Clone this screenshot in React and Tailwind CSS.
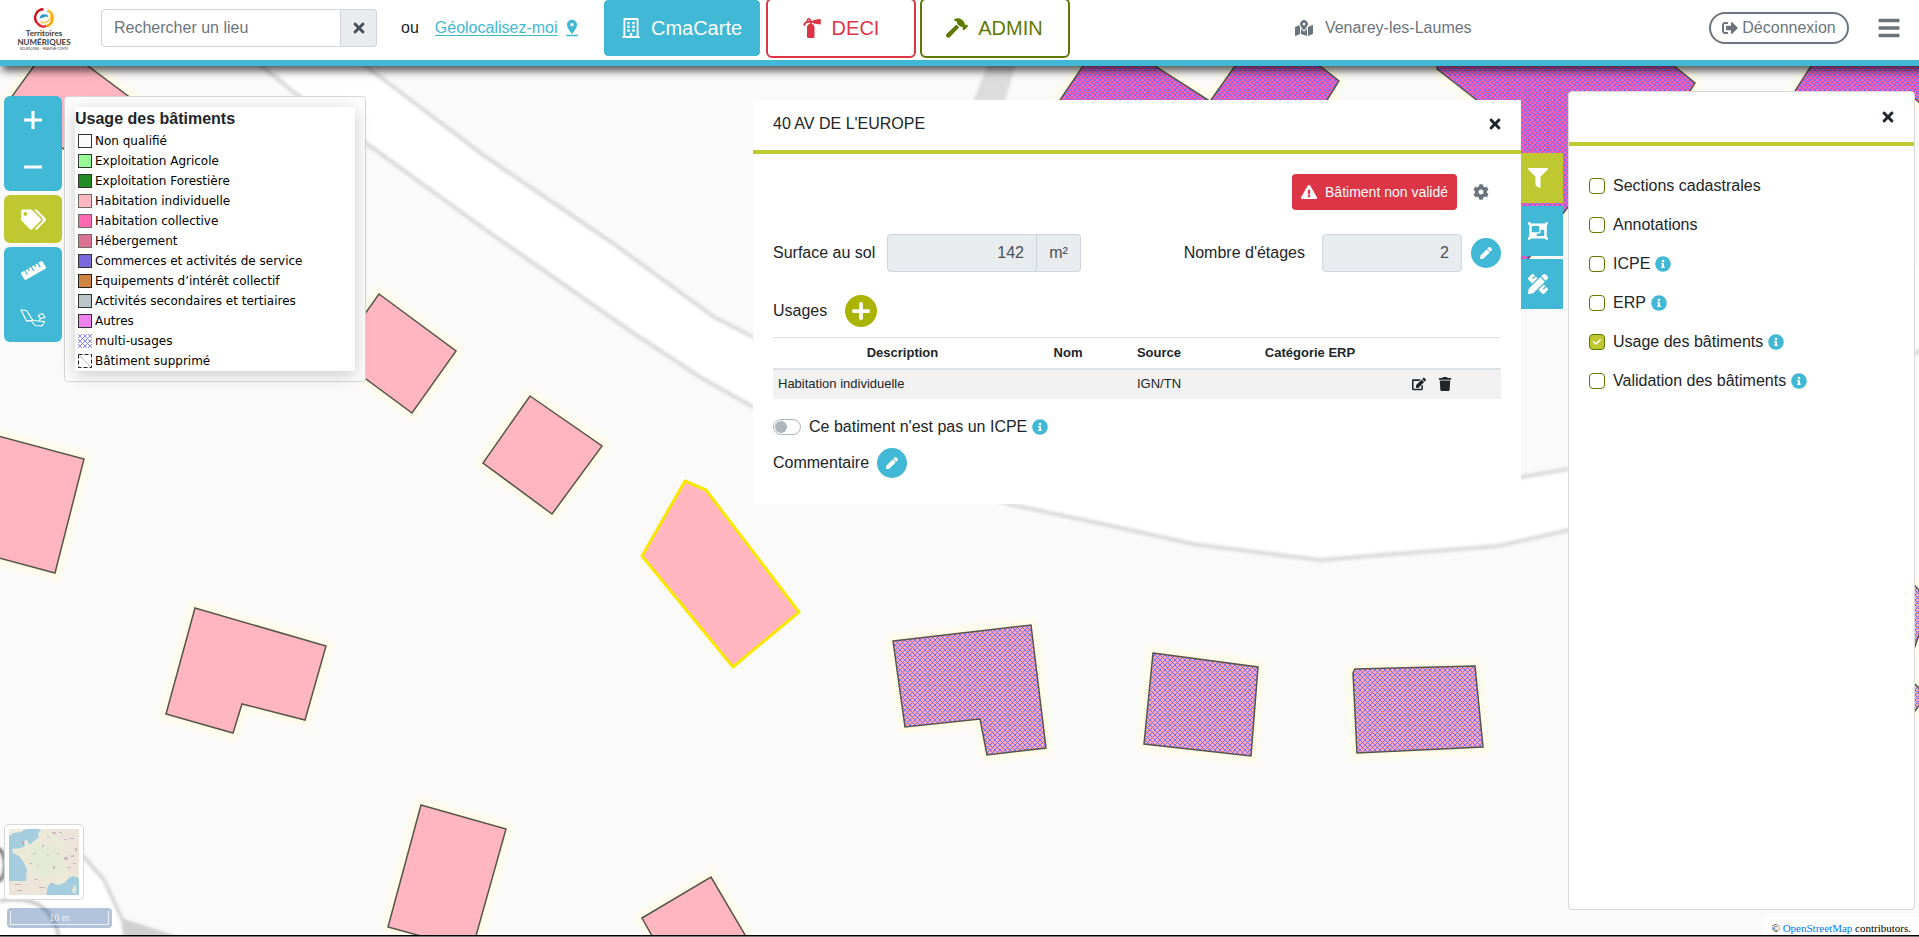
import React, { useState } from "react";
import {
  FaTimes, FaRegBuilding, FaFireExtinguisher, FaHammer, FaMapMarkedAlt, FaSignOutAlt,
  FaBars, FaInfoCircle, FaExclamationTriangle, FaCog, FaPen, FaEdit, FaTrash, FaFilter,
  FaObjectGroup, FaPencilRuler, FaTags, FaRuler, FaPlus, FaCheck,
} from "react-icons/fa";
import { MdPinDrop } from "react-icons/md";

const INDIVIDUAL = [
  "34,66 55,38 88,66 140,105 98,174 5,106",
  "379,294 456,351 412,413 335,356",
  "530,396 602,446 552,514 483,463",
  "-2,436 84,459 55,573 -5,557",
  "195,608 326,646 305,720 242,704 233,733 166,714",
  "421,805 506,829 472,950 388,927",
  "642,918 711,877 748,940 660,950",
];
const MIXED_COLLECTIVE = [
  "1083,66 1060,100 1150,160 1208,100 1155,66 1120,40",
  "1235,66 1211,100 1300,140 1327,100 1339,81 1320,66 1280,40",
  "1437,69 1515,130 1460,200 1515,276 1568,207 1640,140 1690,91 1695,83 1674,66 1660,50 1440,50",
  "1811,66 1795,91 1850,140 1914,98 1930,112 1930,50 1820,50",
];
const MIXED_INDIVIDUAL = [
  "893,641 1031,625 1046,748 987,755 980,719 905,727",
  "1153,653 1258,667 1251,756 1144,744",
  "1355,669 1475,666 1483,747 1357,753 1353,673",
  "1900,570 1919,590 1924,620 1900,690",
  "1900,670 1919,688 1922,702 1900,730",
];

function CityMap() {
  return (
    <svg
      className="absolute inset-0 h-full w-full"
      viewBox="0 66 1919 871"
      preserveAspectRatio="xMinYMin slice"
      aria-hidden="true"
    >
      <defs>
        <pattern id="hatch-pink" width="5" height="5" patternUnits="userSpaceOnUse">
          <rect width="5" height="5" fill="#ffa6b8" />
          <path d="M-1 -1L6 6M-1 6L6 -1" stroke="#6a6aff" strokeWidth="0.900" />
        </pattern>
        <pattern id="hatch-hot" width="5" height="5" patternUnits="userSpaceOnUse">
          <rect width="5" height="5" fill="#ff5fb0" />
          <path d="M-1 -1L6 6M-1 6L6 -1" stroke="#6a6aff" strokeWidth="0.900" />
        </pattern>
        <filter id="soft" x="-5%" y="-5%" width="110%" height="110%">
          <feGaussianBlur stdDeviation="1.5" />
        </filter>
        <filter id="halo" x="-5%" y="-5%" width="110%" height="110%">
          <feGaussianBlur stdDeviation="3" />
        </filter>
      </defs>
      <rect x="0" y="0" width="1919" height="937" fill="#fafafa" />
      <g filter="url(#soft)">
        <path
          d="M262 60L300 95L366 142L486 230L629 330L700 377L753 407L900 465L1009 504L1117 527L1193 544L1264 553L1320 560L1381 555L1498 546L1569 530L1930 340L1930 260L1569 469L1522 477L1320 490L1000 430L753 337L714 317L611 242L486 157L371 70L360 60Z"
          fill="#fff"
        />
        <g fill="none" stroke="#d9d9d9" strokeWidth="4">
          <path d="M254 60L300 97L366 143L486 230L629 330L700 377L753 407L900 467L1009 504L1117 527L1193 544L1264 553L1320 560L1381 555L1498 546L1569 530L1700 460L1930 346" />
          <path d="M358 60L371 70L486 157L611 242L714 317L753 337L1000 430L1320 490L1522 477L1569 469" />
        </g>
        <path d="M990 60L1017 60L1004 104L972 104Z" fill="#dcdcdc" />
        <path d="M0 845L60 840L84 857L104 880L123 921L130 940L0 940Z" fill="#fff" />
        <path d="M60 838L84 857L104 880L123 921" fill="none" stroke="#d6d6d6" strokeWidth="4" />
        <path d="M121 918L180 937L123 937Z" fill="#d0d0d0" />
        <path d="M0 901Q50 892 59 937" fill="none" stroke="#c8c8c8" strokeWidth="4" />
        <ellipse cx="-2" cy="865" rx="7" ry="16" fill="none" stroke="#6e6e6e" strokeWidth="4" />
      </g>
      <g fill="none" stroke="#fffce6" strokeWidth="12" filter="url(#halo)">
        {[...INDIVIDUAL, ...MIXED_COLLECTIVE, ...MIXED_INDIVIDUAL].map((p) => (
          <polygon key={p} points={p} />
        ))}
      </g>
      <g stroke="#55554d" strokeWidth="1.5">
        {INDIVIDUAL.map((p) => <polygon key={p} points={p} fill="#ffb6c1" />)}
        {MIXED_COLLECTIVE.map((p) => <polygon key={p} points={p} fill="url(#hatch-hot)" />)}
        {MIXED_INDIVIDUAL.map((p) => <polygon key={p} points={p} fill="url(#hatch-pink)" />)}
      </g>
      <polygon
        points="685,481 706,490 799,612 733,667 642,556"
        fill="#ffb6c1" stroke="#f8e800" strokeWidth="3" strokeLinejoin="round"
      />
    </svg>
  );
}

function Logo() {
  return (
    <a href="#accueil" className="flex w-[50px] flex-col items-center pt-0.5 font-['Lato',sans-serif] font-bold text-[#3a3a3a]">
      <svg className="h-5 w-5" viewBox="0 0 20 20" fill="none" aria-hidden="true">
        <path d="M9.500 1.300A8.300 8.300 0 0 0 3.200 15" stroke="#c8141c" strokeWidth="2.400" />
        <path d="M3.200 15A8.300 8.300 0 0 0 12.500 18" stroke="#e5262c" strokeWidth="2.200" />
        <path d="M12.500 18A8.300 8.300 0 0 0 13.500 2.400" stroke="#f6a800" strokeWidth="2.600" />
        <path d="M13.500 2.400A6 6 0 0 1 13.600 13.200A6 6 0 0 1 6.500 13.600" stroke="#f9c440" strokeWidth="1.500" />
        <path d="M5.500 11C5.500 7 9 5.200 12.500 6.600C14 7.300 14.400 8.500 14 9.600C12.500 7.800 11 8.600 9.500 9.600C8.300 10.300 7 9.800 5.500 11Z" fill="#2a9ac4" />
      </svg>
      <span className="mt-px text-[8px] leading-[9px]">Territoires</span>
      <span className="text-[8px] leading-[9px]">NUMÉRIQUES</span>
      <span className="text-[3px] leading-[4px] font-normal">BOURGOGNE – FRANCHE-COMTÉ</span>
    </a>
  );
}

function Header() {
  return (
    <header className="relative z-20 flex h-[66px] items-center border-b-[6px] border-[#41b8d5] bg-white pr-[18px] pb-1 pl-[19px] shadow-[5px_2px_8px_3px_rgba(0,0,0,0.65)]">
      <Logo />
      <form className="ml-8 flex h-[38px] w-[276px]" onSubmit={(e) => e.preventDefault()}>
        <input
          type="text"
          aria-label="Rechercher un lieu"
          placeholder="Rechercher un lieu"
          className="min-w-0 flex-1 rounded-l border border-[#ced4da] px-3 text-[#495057] placeholder:text-[#6c757d]"
        />
        <button type="button" aria-label="Effacer" className="flex w-9 items-center justify-center rounded-r border border-l-0 border-[#ced4da] bg-[#e9ecef] text-[#495057]">
          <FaTimes size={16} />
        </button>
      </form>
      <span className="ml-6">ou</span>
      <a href="#geolocalisation" className="ml-4 flex items-center gap-1 text-[#41b8d5]">
        <span className="underline underline-offset-2">Géolocalisez-moi</span>
        <MdPinDrop size={20} />
      </a>
      <nav className="ml-5 flex h-[60px] shrink-0 gap-1 text-xl">
        <a href="#cmacarte" className="flex w-40 items-center justify-center gap-2.5 rounded-md border-2 border-white bg-[#41b8d5] bg-clip-padding text-white">
          <FaRegBuilding size={20} />CmaCarte
        </a>
        <a href="#deci" className="flex w-[150px] items-center justify-center gap-2.5 rounded-md border-2 border-[#dc3545] text-[#dc3545]">
          <FaFireExtinguisher size={20} />DECI
        </a>
        <a href="#admin" className="flex w-[150px] items-center justify-center gap-2.5 rounded-md border-2 border-[#5f7900] text-[#5f7900]">
          <FaHammer size={22} />ADMIN
        </a>
      </nav>
      <div className="flex flex-1 items-center justify-center gap-3 pr-3 text-[#6c757d]">
        <FaMapMarkedAlt size={18} />
        <span>Venarey-les-Laumes</span>
      </div>
      <button type="button" className="flex h-8 w-[140px] items-center justify-center gap-1 rounded-full border-2 border-[#6c757d] text-[#6c757d]">
        <FaSignOutAlt size={16} />Déconnexion
      </button>
      <button type="button" aria-label="Menu" className="ml-7 text-[#6c757d]">
        <FaBars size={24} />
      </button>
    </header>
  );
}

const tool = "flex flex-1 items-center justify-center";

function MapTools() {
  return (
    <div className="mt-[30px] ml-1 flex w-[58px] flex-col gap-1 text-white">
      <div className="flex h-[95px] flex-col rounded-md bg-[#41b8d5]">
        <button type="button" aria-label="Zoom avant" className={tool}>
          <svg width="18" height="18" viewBox="0 0 18 18" stroke="currentColor" strokeWidth="3"><path d="M0 9H18M9 0V18" /></svg>
        </button>
        <button type="button" aria-label="Zoom arrière" className={tool}>
          <svg width="18" height="18" viewBox="0 0 18 18" stroke="currentColor" strokeWidth="3"><path d="M0 9H18" /></svg>
        </button>
      </div>
      <div className="flex h-12 rounded-md bg-[#bfc731]">
        <button type="button" aria-label="Légende" className={tool}><FaTags size={25} /></button>
      </div>
      <div className="flex h-[95px] flex-col rounded-md bg-[#41b8d5]">
        <button type="button" aria-label="Mesurer une distance" className={tool}><FaRuler size={25} /></button>
        <button type="button" aria-label="Mesurer une surface" className={tool}>
          <svg width="26" height="18" viewBox="0 0 26 18" fill="none" stroke="currentColor" strokeWidth="1.200" strokeLinejoin="round">
            <path d="M1 1L6.500 1.500L13 11.500L6.500 12Z" />
            <path d="M6.500 12L11 11.500L15 16.500L22 17L24.500 12.500L13 11.500" />
            <path d="M18 6.500L22.500 4.500L25 8.500L20.500 9.500L18 6.500M20.500 9.500L19 12" />
          </svg>
        </button>
      </div>
    </div>
  );
}

const LEGEND = [
  ["Non qualifié", "border-[#333] bg-[#fafafa]"],
  ["Exploitation Agricole", "border-[#333] bg-[#98fb98]"],
  ["Exploitation Forestière", "border-[#333] bg-[#228b22]"],
  ["Habitation individuelle", "border-[#6b6b63] bg-[#ffb6c1]"],
  ["Habitation collective", "border-[#6b6b63] bg-[#ff69b4]"],
  ["Hébergement", "border-[#6b6b63] bg-[#db7093]"],
  ["Commerces et activités de service", "border-[#333] bg-[#7b68dc]"],
  ["Equipements d’intérêt collectif", "border-[#222] bg-[#cd853f]"],
  ["Activités secondaires et tertiaires", "border-[#333] bg-[#b9c6c9]"],
  ["Autres", "border-[#333] bg-[#ee82ee]"],
  ["multi-usages", "hatch"],
  ["Bâtiment supprimé", "dashed"],
];

function Swatch({ kind }) {
  if (kind === "hatch") {
    return (
      <svg className="h-[14px] w-[14px]" viewBox="0 0 14 14" stroke="#7a7aff" strokeWidth="0.900" aria-hidden="true">
        <path d="M0 10L4 14M0 5L9 14M0 0L14 14M5 0L14 9M10 0L14 4M0 4L4 0M0 9L9 0M0 14L14 0M5 14L14 5M10 14L14 10" />
      </svg>
    );
  }
  if (kind === "dashed") {
    return (
      <svg className="h-[14px] w-[14px]" viewBox="0 0 14 14" fill="none" aria-hidden="true">
        <path d="M2 2L12 12" stroke="#bbb" />
        <rect x="0.500" y="0.500" width="13" height="13" stroke="#222" strokeDasharray="4 2" />
      </svg>
    );
  }
  return <span className={"h-[14px] w-[14px] border " + kind} />;
}

function Legend() {
  return (
    <section className="mt-[30px] ml-0.5 w-[302px] rounded border border-[#d8d8d8] bg-[#fdfdfd] p-[10px]">
      <div className="bg-white shadow-[0_4px_16px_rgba(0,0,0,0.2)]">
        <h2 className="font-bold leading-6">Usage des bâtiments</h2>
        <ul className="font-['DejaVu_Sans',sans-serif] text-xs text-black">
          {LEGEND.map(([label, kind]) => (
            <li key={label} className="flex h-5 items-center gap-[3px] pl-[3px]">
              <Swatch kind={kind} />
              {label}
            </li>
          ))}
        </ul>
      </div>
    </section>
  );
}

function RoundEdit({ label }) {
  return (
    <button type="button" aria-label={label} className="flex h-[30px] w-[30px] items-center justify-center rounded-full bg-[#41b8d5] text-white">
      <FaPen size={12} />
    </button>
  );
}

function BuildingPanel() {
  const [icpe, setIcpe] = useState(false);
  return (
    <section className="mt-[34px] w-[768px] bg-white pb-[26px]">
      <header className="flex h-[54px] items-center justify-between border-b-4 border-[#bfc731] pr-[18px] pb-0.5 pl-5">
        <h1>40 AV DE L'EUROPE</h1>
        <button type="button" aria-label="Fermer"><FaTimes size={16} /></button>
      </header>
      <div className="px-5 pt-5">
        <div className="flex items-center justify-end gap-4 pr-3">
          <button type="button" className="flex h-9 items-center gap-2 rounded bg-[#dc3545] px-[9px] text-sm text-white">
            <FaExclamationTriangle size={16} />Bâtiment non validé
          </button>
          <button type="button" aria-label="Paramètres" className="text-[#6c757d]"><FaCog size={16} /></button>
        </div>
        <div className="mt-6 flex h-[38px] items-center">
          <label htmlFor="surface" className="w-[114px]">Surface au sol</label>
          <input id="surface" readOnly value="142" className="h-full w-[150px] rounded-l border border-[#ced4da] bg-[#e9ecef] px-3 text-right text-[#495057]" />
          <span className="flex h-full w-11 items-center justify-center rounded-r border border-l-0 border-[#ced4da] bg-[#e9ecef] text-[#495057]">m²</span>
          <label htmlFor="etages" className="ml-auto">Nombre d'étages</label>
          <input id="etages" readOnly value="2" className="mr-[9px] ml-[17px] h-full w-[140px] rounded border border-[#ced4da] bg-[#e9ecef] px-3 text-right text-[#495057]" />
          <RoundEdit label="Modifier le nombre d'étages" />
        </div>
        <div className="mt-[23px] flex items-center gap-[18px]">
          <h2>Usages</h2>
          <button type="button" aria-label="Ajouter un usage" className="flex h-8 w-8 items-center justify-center rounded-full bg-[#a9b300] text-white">
            <FaPlus size={20} />
          </button>
        </div>
        <table className="mt-[10px] w-full table-fixed border-collapse text-[13px]">
          <colgroup>
            <col className="w-[259px]" /><col className="w-[72px]" /><col className="w-[110px]" /><col className="w-[192px]" /><col />
          </colgroup>
          <thead>
            <tr className="h-[31px] border-t border-b-2 border-[#dee2e6]">
              <th>Description</th><th>Nom</th><th>Source</th><th>Catégorie ERP</th><th aria-label="Actions" />
            </tr>
          </thead>
          <tbody>
            <tr className="h-[30px] bg-[#f2f2f2] text-center">
              <td className="pl-[5px] text-left">Habitation individuelle</td>
              <td />
              <td>IGN/TN</td>
              <td />
              <td>
                <div className="flex items-center gap-3 pl-1.5">
                  <button type="button" aria-label="Modifier"><FaEdit size={14} /></button>
                  <button type="button" aria-label="Supprimer"><FaTrash size={14} /></button>
                </div>
              </td>
            </tr>
          </tbody>
        </table>
        <label className="mt-4 flex items-center">
          <input
            type="checkbox"
            role="switch"
            checked={icpe}
            onChange={() => setIcpe(!icpe)}
            className="mr-2 h-4 w-7 appearance-none rounded-full border border-[#adb5bd] bg-white before:mt-px before:ml-px before:block before:h-3 before:w-3 before:rounded-full before:bg-[#adb5bd] checked:before:ml-[13px]"
          />
          Ce batiment n'est pas un ICPE
          <FaInfoCircle size={16} className="ml-[5px] text-[#41b8d5]" />
        </label>
        <div className="mt-[9px] flex items-center gap-2">
          <span>Commentaire</span>
          <RoundEdit label="Modifier le commentaire" />
        </div>
      </div>
    </section>
  );
}

const tab = "flex h-[50px] items-center pl-[7px]";

function SideTabs() {
  return (
    <div className="mt-[87px] flex w-[42px] flex-col gap-[3px] text-white">
      <button type="button" aria-label="Filtres" className={tab + " bg-[#bfc731]"}><FaFilter size={20} /></button>
      <button type="button" aria-label="Sélection" className={tab + " bg-[#41b8d5]"}><FaObjectGroup size={20} /></button>
      <button type="button" aria-label="Dessin" className={tab + " bg-[#41b8d5]"}><FaPencilRuler size={20} /></button>
    </div>
  );
}

const LAYERS = [
  ["Sections cadastrales", false],
  ["Annotations", false],
  ["ICPE", true],
  ["ERP", true],
  ["Usage des bâtiments", true],
  ["Validation des bâtiments", true],
];

function LayersPanel() {
  const [on, setOn] = useState({ "Usage des bâtiments": true });
  return (
    <aside className="mt-[25px] mr-1 mb-[25px] ml-[5px] w-[347px] self-stretch rounded border border-[#d8d8d8] bg-white">
      <header className="flex h-[54px] items-center justify-end border-b-4 border-[#bfc731] pr-[18px]">
        <button type="button" aria-label="Fermer"><FaTimes size={16} /></button>
      </header>
      <ul className="flex flex-col gap-[15px] px-5 pt-7">
        {LAYERS.map(([label, info]) => (
          <li key={label}>
            <label className="flex h-6 items-center">
              <span className="mr-2 grid place-items-center">
                <input
                  type="checkbox"
                  checked={!!on[label]}
                  onChange={() => setOn({ ...on, [label]: !on[label] })}
                  className="col-start-1 row-start-1 h-4 w-4 appearance-none rounded border border-[#5f7900] bg-white checked:bg-[#bfc731]"
                />
                {on[label] && <FaCheck size={8} className="pointer-events-none z-10 col-start-1 row-start-1 text-white" />}
              </span>
              {label}
              {info && <FaInfoCircle size={16} className="ml-[5px] text-[#41b8d5]" />}
            </label>
          </li>
        ))}
      </ul>
    </aside>
  );
}

function Overview() {
  return (
    <div className="w-20 rounded border border-[#d8d8d8] bg-white p-1">
      <svg className="h-[66px] w-[70px]" viewBox="0 0 70 66" aria-hidden="true">
        <rect width="70" height="66" fill="#a6cddd" />
        <path d="M0 0H17L12 3L5 4L0 7Z" fill="#f0ebdf" />
        <path d="M32 0L29 5L30 8L25 12L22 15L19 14L18 11L15 12L16 17L12 19L3 20L4 24L10 27L14 32L16 36L18 41L17 52H0V66H37L39 57L42 54L50 56L55 54L60 49L64 47L70 49V0Z" fill="#ebead8" />
        <path d="M20 18L34 14L48 18L54 30L48 44L34 48L22 44L22 32Z" fill="#e0e9cf" opacity="0.500" />
        <path d="M40 0H70V46L60 44L56 30L58 16Z" fill="#eddfdc" opacity="0.600" />
        <path d="M18 41L36 54L38 66H0V53H17Z" fill="#efe0da" opacity="0.500" />
        <path d="M64 58L67 56V63L65 65L63 62Z" fill="#e4e8d0" />
        <g fill="#b79ab3" opacity="0.600">
          <path d="M33 16h2v2h-2zM43 3h4v2h-4zM50 3h3v1h-3zM60 9h5v1h-5zM66 19h2v3h-2zM13 12h2v4h-2zM24 24h3v1h-3zM28 36h2v1h-2zM44 37h2v3h-2zM55 28h4v3h-4zM62 26h3v2h-3zM20 34h3v1h-3zM30 58h6v1h-6zM6 55h6v1h-6zM8 61h5v1h-5zM26 50h3v1h-3zM38 8h3v1h-3zM55 10h3v1h-3zM38 26h2v1h-2zM48 24h3v1h-3zM41 54h3v1h-3zM58 38h4v1h-4zM64 34h3v1h-3z" />
        </g>
      </svg>
    </div>
  );
}

export default function App() {
  return (
    <div className="flex min-h-screen flex-col font-['Liberation_Sans',Arial,sans-serif] text-base leading-6 text-[#212529]">
      <Header />
      <main className="relative flex flex-1 overflow-hidden border-b border-[#777]">
        <CityMap />
        <div className="relative flex flex-1 items-start border-b border-black">
          <MapTools />
          <Legend />
          <div className="flex-1" />
          <BuildingPanel />
          <SideTabs />
          <LayersPanel />
        </div>
        <div className="absolute bottom-2 left-1 flex flex-col items-start gap-2">
          <Overview />
          <div className="ml-[3px] w-[105px] rounded bg-[rgba(0,60,136,0.3)] p-[3px]">
            <div className="h-[14px] border border-t-0 border-[#eee] text-center font-['Liberation_Serif',serif] text-[10px] leading-[14px] text-[#eee]">10 m</div>
          </div>
        </div>
        <p className="absolute right-0 bottom-px h-[18px] rounded-tl bg-white/80 px-2 pt-1 font-['Liberation_Serif',serif] text-[11px] leading-[14px] text-black">
          © <a href="#osm" className="text-[#007bff]">OpenStreetMap</a> contributors.
        </p>
      </main>
    </div>
  );
}
